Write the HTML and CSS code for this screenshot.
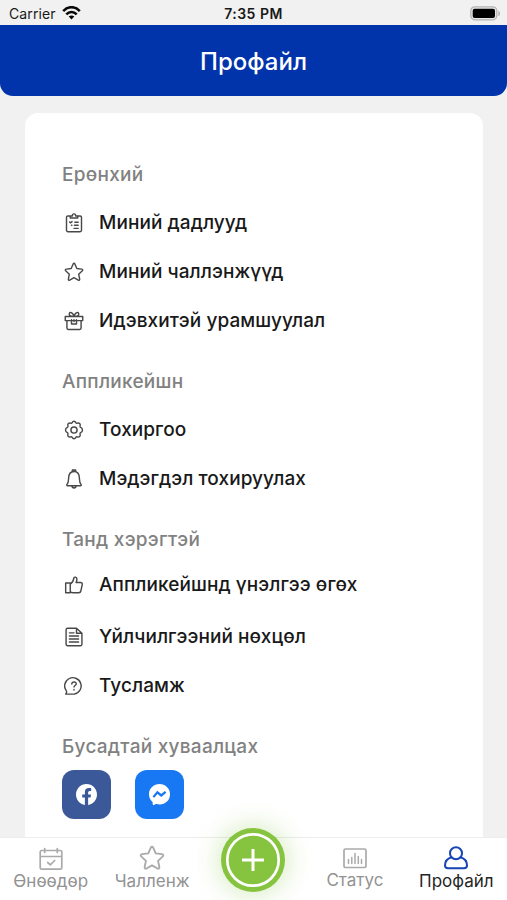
FILE: index.html
```html
<!DOCTYPE html>
<html lang="mn">
<head>
<meta charset="utf-8">
<title>Профайл</title>
<link rel="stylesheet" href="styles.css">
</head>
<body>
<div class="app">
  <div class="status">
    <div class="carrier"><span>Carrier</span>
      <svg width="19" height="14" viewBox="0 0 19 14" fill="none" stroke="#080808" stroke-width="2.6"><path d="M1.2 5.1C6-.1 13-.1 17.8 5.1M4.3 8.3c3-3.1 7.4-3.1 10.4 0"/><path d="M9.5 13.5 6.7 10.6c1.6-1.5 4-1.5 5.600 0z" fill="#080808" stroke="none"/></svg>
    </div>
    <div class="time">7:35 PM</div>
    <svg class="battery" width="31" height="15" viewBox="0 0 31 15"><rect x=".8" y=".8" width="26" height="13" rx="4" fill="#e6e6e6" stroke="#b4b4b4" stroke-width="1.3"/><rect x="2.700" y="2.700" width="22.300" height="9.200" rx="2" fill="#000"/><path d="M28.300 4.700c2.400 1 2.400 4.600 0 5.600z" fill="#b4b4b4"/></svg>
  </div>
  <header class="header"><h1>Профайл</h1></header>
  <main class="content">
    <div class="card">
      <section>
        <h2>Ерөнхий</h2>
        <div class="row"><svg class="icon" viewBox="0 0 24 24"><path d="M8 3.500H4.700A1.700 1.700 0 0 0 3 5.200v15.600a1.700 1.700 0 0 0 1.700 1.700h14.600a1.700 1.700 0 0 0 1.700-1.700V5.200a1.700 1.700 0 0 0-1.700-1.700H16M7.500 6V3.500H10c0-3.300 4-3.300 4 0h2.500V6zM6.700 10.800l1 1 2-1.500M13 11h4M12.500 14.700H17M12 18.400h5M9 14.700h.5"/></svg><span>Миний дадлууд</span></div>
        <div class="row"><svg class="icon" viewBox="0 0 24 24"><path d="M12 1.500c.5 0 .8.400 1 .8l2.400 5.500 5.900.7c1.100.1 1.500 1.300.7 2l-4.400 4.100 1.200 5.900c.2 1-.8 1.700-1.700 1.200L12 18.800l-5.100 2.900c-.9.500-1.900-.2-1.700-1.200l1.200-5.900L2 10.500c-.8-.7-.4-1.900.7-2l5.900-.7L11 2.300c.2-.4.500-.8 1-.8z"/></svg><span>Миний чаллэнжүүд</span></div>
        <div class="row"><svg class="icon" viewBox="0 0 24 24"><path d="M1.500 6.500h21v5h-21zM3.500 11.500v9a1.700 1.700 0 0 0 1.700 1.700h13.600a1.700 1.700 0 0 0 1.700-1.700v-9M9 10.500v5h6v-5M12 10.500v2M12 6.500C7 6.500 5.500 5 6.500 2.700S11 2.500 12 6.500zM12 6.500c5 0 6.500-1.500 5.500-3.800S13 2.500 12 6.500z"/></svg><span>Идэвхитэй урамшуулал</span></div>
      </section>
      <section>
        <h2>Аппликейшн</h2>
        <div class="row"><svg class="icon" viewBox="0 0 24 24"><path d="M9.800 3.200c1-2.200 3.400-2.200 4.400 0 .4.700 1 .9 1.800.6 2.200-.8 4.100 1 3.300 3.200-.3.800 0 1.500.7 1.900 2.900 1.200 2.900 5 0 6.200-.7.400-1 1.100-.7 1.900.8 2.200-1.100 4-3.300 3.200-.8-.3-1.400-.1-1.800.6-1 2.200-3.400 2.200-4.400 0-.4-.7-1-.9-1.800-.6-2.200.8-4.100-1-3.300-3.200.3-.8 0-1.500-.7-1.900-2.900-1.200-2.900-5 0-6.200.7-.4 1-1.100.7-1.900C3.900 4.800 5.800 3 8 3.800c.8.3 1.400.1 1.800-.6z"/><circle cx="12" cy="12" r="3.700"/></svg><span>Тохиргоо</span></div>
        <div class="row"><svg class="icon bell" viewBox="0 0 24 24"><path d="M10 3V1.200h4V3M4.300 20c-1 0-1.400-1-.6-1.700C5.500 16.500 5.300 14.500 5.500 11c.2-5 2.500-8 6.500-8s6.300 3 6.500 8c.2 3.500 0 5.500 1.800 7.300.8.700.4 1.700-.6 1.700zM9.500 20.300c.4 3.300 4.600 3.300 5 0"/></svg><span>Мэдэгдэл тохируулах</span></div>
      </section>
      <section class="help">
        <h2>Танд хэрэгтэй</h2>
        <div class="row"><svg class="icon" viewBox="0 0 24 24"><path d="M2 9.500h5.500v11.700H2zM7.500 11c3-2 4-4.500 4.300-7.200.1-1.900 3.700-1.800 3.700 1.200 0 1.600-.5 2.800-1 4h5.300c1.600 0 2.400 1 2.100 2.500l-1.700 7.700c-.3 1.400-1.100 2-2.400 2h-7c-1.300 0-2.300-.4-3.300-1z"/></svg><span>Аппликейшнд үнэлгээ өгөх</span></div>
        <div class="row"><svg class="icon" viewBox="0 0 24 24"><path d="M4.200 1.500H15L21.500 7.500v13.300a1.700 1.700 0 0 1-1.700 1.700H4.200a1.700 1.700 0 0 1-1.700-1.700V3.200a1.700 1.700 0 0 1 1.700-1.700zM15 1.500v6h6.500M6.500 7H12M6.500 10.800h11M6.500 14.400h11M6.500 18h11"/></svg><span>Үйлчилгээний нөхцөл</span></div>
        <div class="row"><svg class="icon" viewBox="0 0 24 24"><path d="M2 21.700c1.200-1.200 1.300-2 1-3.500A9.900 9.900 0 1 1 12.300 21.700zM9.300 9.500c.4-3.300 5.600-3 5.400 0-.2 1.900-2.700 1.900-2.700 3.700M12 16v.7"/></svg><span>Тусламж</span></div>
      </section>
      <section>
        <h2>Бусадтай хуваалцах</h2>
        <div class="share">
          <div class="tile facebook"><svg width="21" height="21" viewBox="0 0 24 24"><path fill="#fff" d="M24 12.070C24 5.410 18.630 0 12 0S0 5.410 0 12.070c0 6.030 4.390 11.020 10.130 11.930v-8.440H7.080v-3.490h3.050V9.410c0-3.030 1.790-4.700 4.530-4.700 1.310 0 2.680.240 2.680.240v2.970h-1.510c-1.490 0-1.960.930-1.960 1.890v2.260h3.330l-.530 3.490h-2.800V24C19.610 23.090 24 18.100 24 12.070z"/></svg></div>
          <div class="tile messenger"><svg width="21" height="21" viewBox="0 0 24 24"><path fill="#fff" d="M12 0C5.240 0 0 4.950 0 11.640c0 3.500 1.430 6.520 3.770 8.610.5.450.4.750.5 2.900.05.700.7 1.100 1.300.800l2.400-1.050c.3-.1.400-.1.700-.05 7.900 2.200 15.330-3.100 15.330-11.210C24 4.950 18.760 0 12 0z"/><path d="m5 15 4.600-5.500 4.400 3.600L19 9" fill="none" stroke="#1877f2" stroke-width="2.600"/></svg></div>
        </div>
      </section>
    </div>
  </main>
  <nav class="tabs">
    <div class="tab"><svg width="26" height="24" viewBox="0 0 26 24"><path d="M3.700 3.500h18.600a1.500 1.500 0 0 1 1.500 1.500v15.700a1.500 1.500 0 0 1-1.500 1.500H3.700a1.500 1.500 0 0 1-1.500-1.500V5a1.500 1.500 0 0 1 1.500-1.500zM2.200 9.500h21.600M6.700 1.500v4M19.300 1.500v4M9.700 15.500l2.600 2.300 4.400-4.300"/></svg><span>Өнөөдөр</span></div>
    <div class="tab"><svg width="26" height="26" viewBox="0 0 24 24"><path d="M12 1.500c.5 0 .8.400 1 .8l2.400 5.500 5.900.7c1.100.1 1.500 1.300.7 2l-4.400 4.100 1.200 5.900c.2 1-.8 1.700-1.700 1.200L12 18.800l-5.100 2.900c-.9.500-1.900-.2-1.700-1.200l1.200-5.900L2 10.500c-.8-.7-.4-1.900.7-2l5.900-.7L11 2.300c.2-.4.500-.8 1-.8z"/></svg><span>Чалленж</span></div>
    <div class="plus"><div class="disc"><svg width="64" height="64" viewBox="0 0 64 64"><circle cx="32" cy="32" r="25.700" stroke-width="2.700"/><path d="M32 21v22M21 32h22" stroke-width="3"/></svg></div></div>
    <div class="tab stats"><svg width="26" height="24" viewBox="0 0 26 24"><rect x="2" y="3" width="22" height="18.500" rx="1.500"/><path d="M6.500 17.500v-4M9.800 17.500v-6M13 17.500v-10M16.300 17.500v-7M19.500 17.500v-4" stroke-width="1.500"/></svg><span>Статус</span></div>
    <div class="tab active"><svg width="26" height="26" viewBox="0 0 26 26"><circle cx="13" cy="8.300" r="6"/><path d="M8.500 12.300C4.500 13.500 2 16.800 2 20.600c0 1.800 1 2.700 3 2.700h16c2 0 3-.9 3-2.700 0-3.800-2.500-7.100-6.500-8.300"/></svg><span>Профайл</span></div>
  </nav>
</div>
</body>
</html>
```
FILE: styles.css
```css
* { box-sizing: border-box; }
body {
  margin: 0;
  background: #f1f1f1;
  color: #191919;
  font-family: Inter, "Liberation Sans", sans-serif;
}
.app {
  height: 900px;
  display: flex;
  flex-direction: column;
  overflow: hidden;
}
.status {
  height: 25px;
  flex: none;
  display: grid;
  grid-template-columns: 1fr auto 1fr;
  align-items: center;
  padding: 1px 6px 0 9px;
  font-size: 14px;
}
.carrier { display: flex; align-items: center; gap: 6px; letter-spacing: .1px; }
.time { margin-left: -3px; font-weight: 600; letter-spacing: .5px; }
.battery { justify-self: end; }
.header {
  height: 71px;
  flex: none;
  display: flex;
  justify-content: center;
  align-items: center;
  padding-top: 1px;
  background: #0134aa;
  border-radius: 0 0 13px 13px;
}
h1 {
  margin: 0;
  color: #fff;
  font-size: 24px;
  font-weight: 450;
}
.content { flex: 1; min-height: 0; padding: 17px 24px 0 25px; }
.card {
  height: 100%;
  padding: 50px 37px 0;
  background: #fff;
  border-radius: 13px 13px 0 0;
}
section { margin-bottom: 24px; }
h2 {
  height: 24px;
  margin: 0 0 11px;
  color: #818181;
  font-size: 19px;
  line-height: 24px;
  font-weight: 500;
  letter-spacing: .27px;
  white-space: nowrap;
}
section + section { margin-top: 25px; }
section { margin-bottom: 0; }
.row {
  height: 49px;
  display: flex;
  align-items: center;
  gap: 15px;
  padding-left: 2px;
  font-size: 19px;
  font-weight: 500;
  letter-spacing: .07px;
  white-space: nowrap;
}
.icon {
  width: 20px;
  height: 22px;
  flex: none;
  fill: none;
  stroke: #484848;
  stroke-width: 1.7;
  stroke-linejoin: round;
  stroke-linecap: round;
}
.help h2 { margin-bottom: 8px; }
.help h2 + .row { margin-bottom: 3px; }
.share { display: flex; gap: 24px; }
.tile {
  width: 49px;
  height: 49px;
  display: flex;
  align-items: center;
  justify-content: center;
  border-radius: 12px;
}
.facebook { background: #3b5998; }
.messenger { background: #1877f2; }
.tabs {
  height: 63px;
  flex: none;
  display: grid;
  grid-template-columns: repeat(5, 1fr);
  background: #fff;
  border-top: 1px solid #ededed;
}
.tab {
  display: flex;
  flex-direction: column;
  align-items: center;
  justify-content: flex-end;
  padding-bottom: 9px;
  color: #929292;
  font-size: 17px;
  line-height: 20px;
}
.stats { padding-bottom: 10px; }
.tab svg {
  fill: none;
  stroke: #aaa;
  stroke-width: 1.7;
  stroke-linejoin: round;
  stroke-linecap: round;
}
.tab.active { color: #252525; }
.tab.active svg { stroke: #1745b5; stroke-width: 2; }
.plus { display: flex; justify-content: center; }
.disc {
  width: 64px;
  height: 64px;
  margin-top: -10px;
  border-radius: 50%;
  background: #86c440;
  box-shadow: 0 0 24px 3px rgba(134, 196, 64, .32);
}
.disc svg { display: block; fill: none; stroke: #fff; }
```
